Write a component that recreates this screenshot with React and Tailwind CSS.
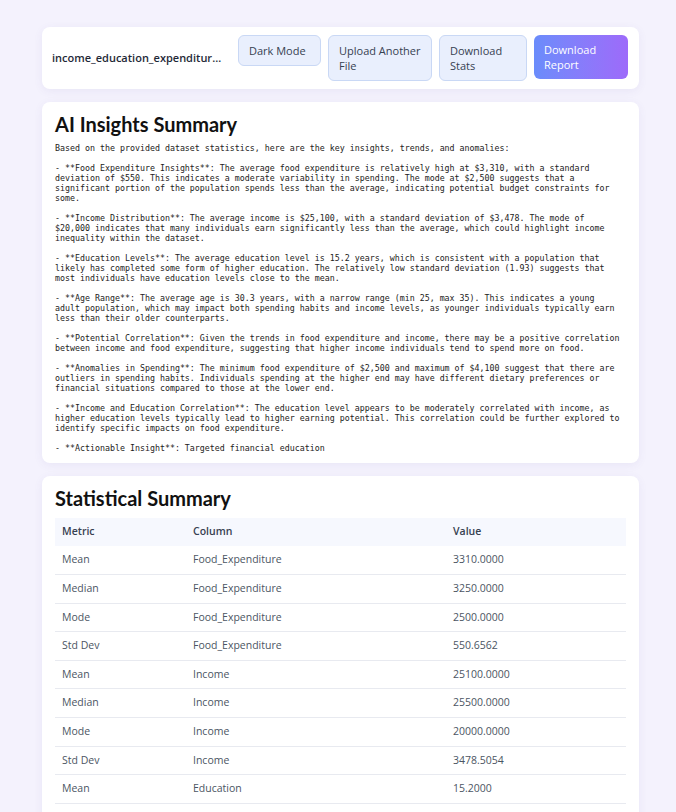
const insights = [
  'Based on the provided dataset statistics, here are the key insights, trends, and anomalies:',
  '- **Food Expenditure Insights**: The average food expenditure is relatively high at $3,310, with a standard deviation of $550. This indicates a moderate variability in spending. The mode at $2,500 suggests that a significant portion of the population spends less than the average, indicating potential budget constraints for some.',
  '- **Income Distribution**: The average income is $25,100, with a standard deviation of $3,478. The mode of $20,000 indicates that many individuals earn significantly less than the average, which could highlight income inequality within the dataset.',
  '- **Education Levels**: The average education level is 15.2 years, which is consistent with a population that likely has completed some form of higher education. The relatively low standard deviation (1.93) suggests that most individuals have education levels close to the mean.',
  '- **Age Range**: The average age is 30.3 years, with a narrow range (min 25, max 35). This indicates a young adult population, which may impact both spending habits and income levels, as younger individuals typically earn less than their older counterparts.',
  '- **Potential Correlation**: Given the trends in food expenditure and income, there may be a positive correlation between income and food expenditure, suggesting that higher income individuals tend to spend more on food.',
  '- **Anomalies in Spending**: The minimum food expenditure of $2,500 and maximum of $4,100 suggest that there are outliers in spending habits. Individuals spending at the higher end may have different dietary preferences or financial situations compared to those at the lower end.',
  '- **Income and Education Correlation**: The education level appears to be moderately correlated with income, as higher education levels typically lead to higher earning potential. This correlation could be further explored to identify specific impacts on food expenditure.',
  '- **Actionable Insight**: Targeted financial education',
].join('\n\n');

const stats = [
  ['Mean', 'Food_Expenditure', '3310.0000'],
  ['Median', 'Food_Expenditure', '3250.0000'],
  ['Mode', 'Food_Expenditure', '2500.0000'],
  ['Std Dev', 'Food_Expenditure', '550.6562'],
  ['Mean', 'Income', '25100.0000'],
  ['Median', 'Income', '25500.0000'],
  ['Mode', 'Income', '20000.0000'],
  ['Std Dev', 'Income', '3478.5054'],
  ['Mean', 'Education', '15.2000'],
  ['Median', 'Education', '15.5000'],
  ['Mode', 'Education', '16.0000'],
  ['Std Dev', 'Education', '1.9322'],
];

// ── Header bar ───────────────────────────────────────────────────────────────
function Header() {
  const btn = 'shrink-0 rounded-md border border-[#c9d8f5] bg-[#e9effd] px-[10px] py-[7px] text-left text-[11px] leading-[15px] text-[#374151]';
  return (
    <div className="flex items-center rounded-lg bg-white pl-[10px] pr-[11px] py-[8px] shadow-[0_2px_10px_rgba(80,70,160,0.07)]">
      <div className="min-w-0 flex-1 truncate pr-[12px] text-[11px] font-semibold text-[#1f2937]">
        income_education_expenditure_dataset.csv
      </div>
      <div className="flex items-start gap-[7px]">
        <button className={`${btn} w-[83px] text-center`}>Dark Mode</button>
        <button className={`${btn} w-[104px]`}>Upload Another File</button>
        <button className={`${btn} w-[88px]`}>Download Stats</button>
        <button className="w-[94px] shrink-0 rounded-md bg-gradient-to-r from-[#6a8cfb] to-[#9d6afa] px-[10px] py-[7px] text-left text-[11px] leading-[15px] text-white">
          Download Report
        </button>
      </div>
    </div>
  );
}

const heading = 'text-[20px] font-bold leading-[24px] text-[#111]';
const headingFont = { fontFamily: 'Lato, "Open Sans", sans-serif' };

export default function App() {
  return (
    <div
      className="min-h-screen bg-[#f4f2fd] pt-[27px] pb-[20px]"
      style={{ fontFamily: '"Open Sans", Lato, sans-serif' }}
    >
      <div className="ml-[42px] flex w-[597px] flex-col gap-[13px]">
        <Header />

        {/* AI summary */}
        <div className="rounded-lg bg-white px-[13px] pt-[10px] pb-[10px] shadow-[0_2px_10px_rgba(80,70,160,0.07)]">
          <h2 className={`mb-[7px] ${heading}`} style={headingFont}>AI Insights Summary</h2>
          <div className="w-[567px] whitespace-pre-wrap text-[8.3px] leading-[10px] text-[#222]" style={{ fontFamily: '"DejaVu Sans Mono", monospace' }}>
            {insights}
          </div>
        </div>

        {/* Stats table */}
        <div className="rounded-lg bg-white px-[13px] pt-[10px] pb-[14px] shadow-[0_2px_10px_rgba(80,70,160,0.07)]">
          <h2 className={`mb-[8px] ${heading}`} style={headingFont}>Statistical Summary</h2>
          <table className="w-full border-collapse text-[10.5px]">
            <thead>
              <tr className="bg-[#f6f8fe] text-left text-[#374151]">
                <th className="h-[28px] w-[131px] px-[7px] font-semibold">Metric</th>
                <th className="h-[28px] w-[260px] px-[7px] font-semibold">Column</th>
                <th className="h-[28px] px-[7px] font-semibold">Value</th>
              </tr>
            </thead>
            <tbody>
              {stats.map((r, i) => (
                <tr key={i} className="border-b border-[#e8eaf0] text-[#4b5563]">
                  <td className="h-[28.6px] px-[7px]">{r[0]}</td>
                  <td className="h-[28.6px] px-[7px]">{r[1]}</td>
                  <td className="h-[28.6px] px-[7px]">{r[2]}</td>
                </tr>
              ))}
            </tbody>
          </table>
        </div>
      </div>
    </div>
  );
}
